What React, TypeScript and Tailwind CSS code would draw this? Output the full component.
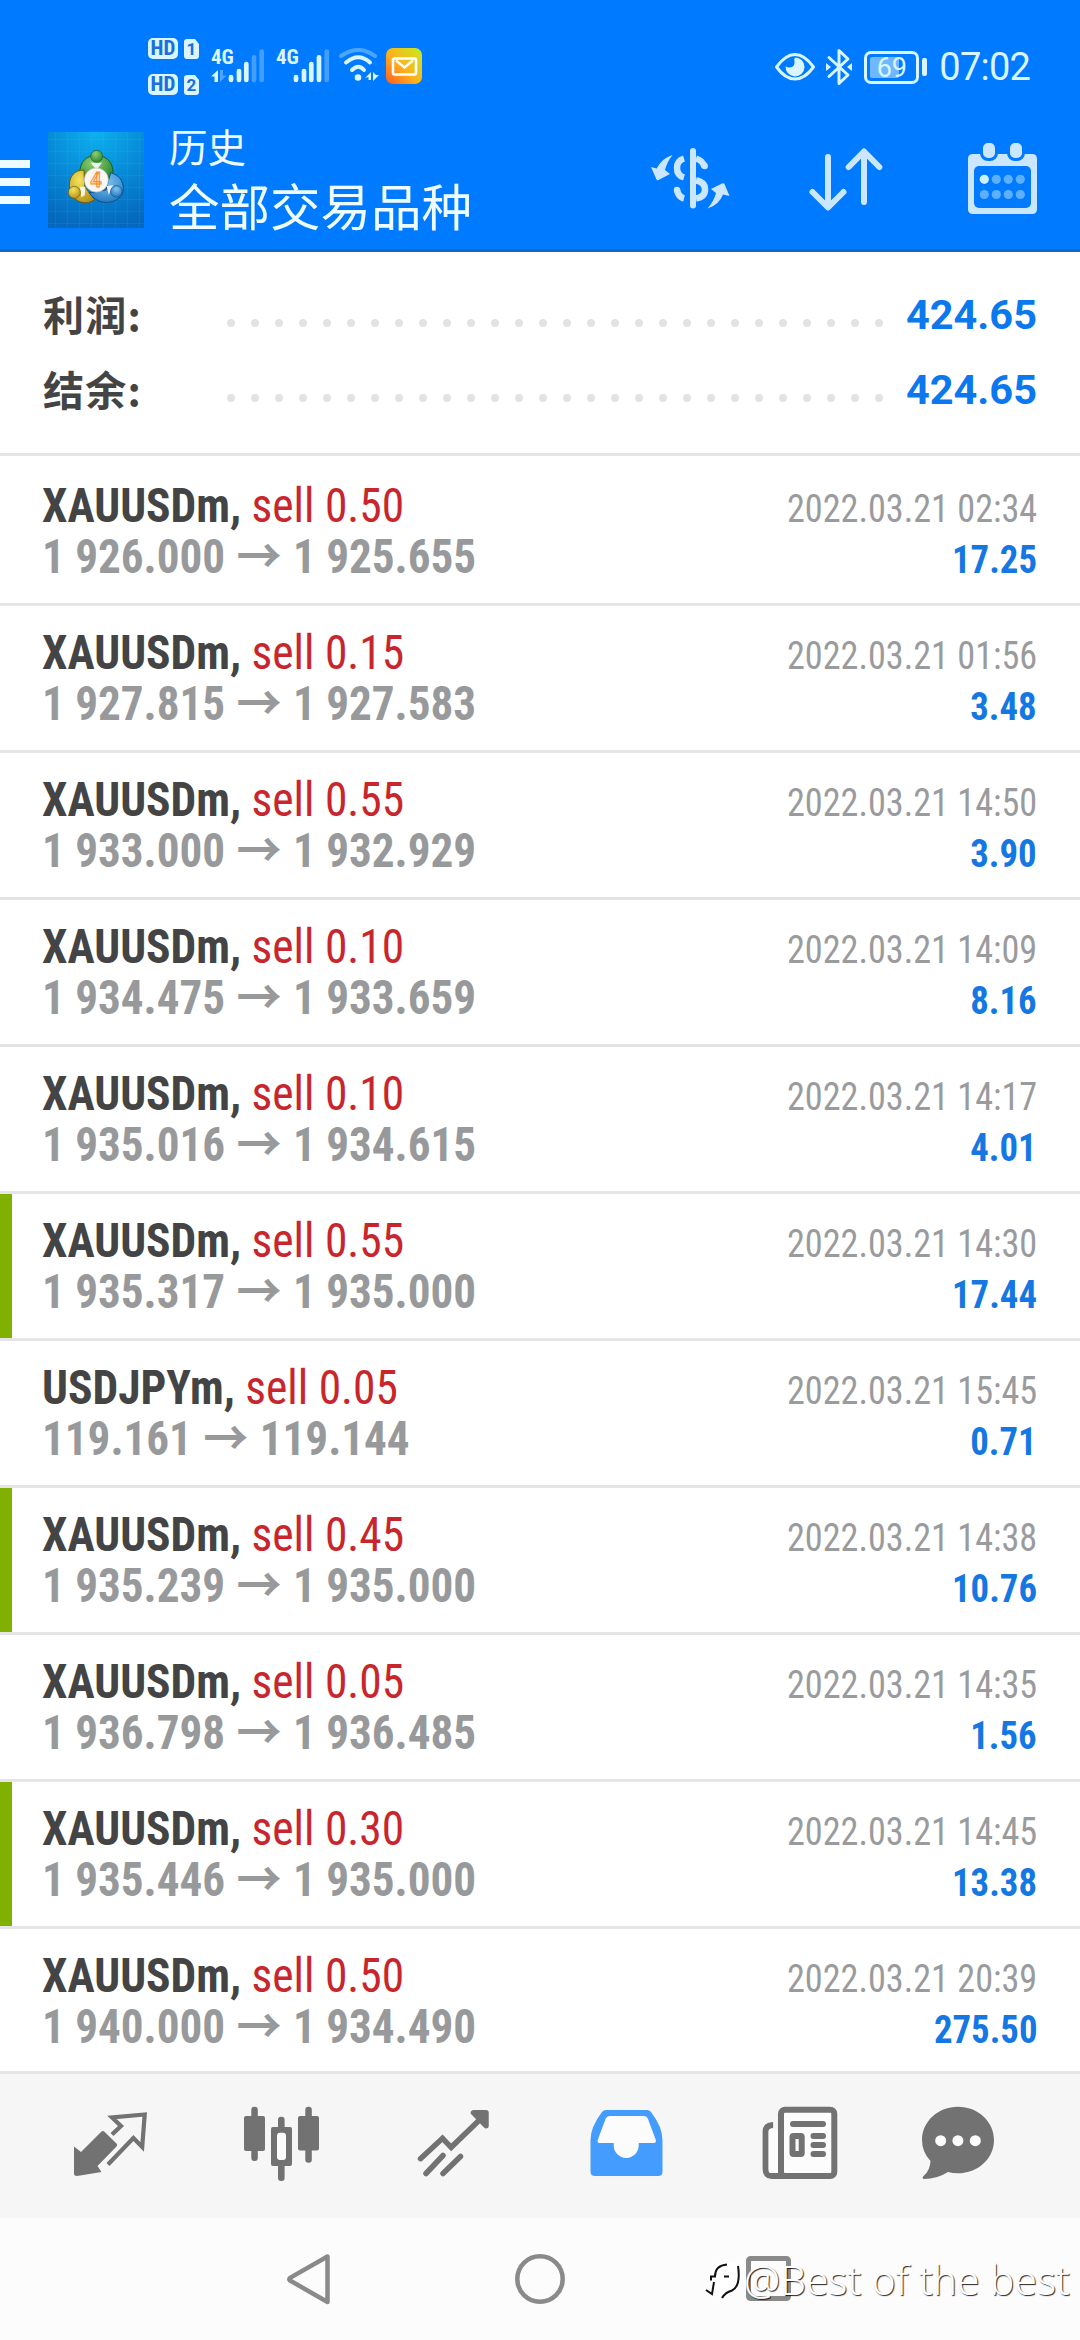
import React from 'react';

interface Deal {
  symbol: string;
  volume: string;
  open: string;
  close: string;
  time: string;
  profit: string;
  marked?: boolean;
}

const DEALS: Deal[] = [
  { symbol: 'XAUUSDm', volume: '0.50', open: '1 926.000', close: '1 925.655', time: '2022.03.21 02:34', profit: '17.25' },
  { symbol: 'XAUUSDm', volume: '0.15', open: '1 927.815', close: '1 927.583', time: '2022.03.21 01:56', profit: '3.48' },
  { symbol: 'XAUUSDm', volume: '0.55', open: '1 933.000', close: '1 932.929', time: '2022.03.21 14:50', profit: '3.90' },
  { symbol: 'XAUUSDm', volume: '0.10', open: '1 934.475', close: '1 933.659', time: '2022.03.21 14:09', profit: '8.16' },
  { symbol: 'XAUUSDm', volume: '0.10', open: '1 935.016', close: '1 934.615', time: '2022.03.21 14:17', profit: '4.01' },
  { symbol: 'XAUUSDm', volume: '0.55', open: '1 935.317', close: '1 935.000', time: '2022.03.21 14:30', profit: '17.44', marked: true },
  { symbol: 'USDJPYm', volume: '0.05', open: '119.161', close: '119.144', time: '2022.03.21 15:45', profit: '0.71' },
  { symbol: 'XAUUSDm', volume: '0.45', open: '1 935.239', close: '1 935.000', time: '2022.03.21 14:38', profit: '10.76', marked: true },
  { symbol: 'XAUUSDm', volume: '0.05', open: '1 936.798', close: '1 936.485', time: '2022.03.21 14:35', profit: '1.56' },
  { symbol: 'XAUUSDm', volume: '0.30', open: '1 935.446', close: '1 935.000', time: '2022.03.21 14:45', profit: '13.38', marked: true },
  { symbol: 'XAUUSDm', volume: '0.50', open: '1 940.000', close: '1 934.490', time: '2022.03.21 20:39', profit: '275.50' },
];

const SUMMARY = [
  { label: '利润:', value: '424.65' },
  { label: '结余:', value: '424.65' },
];

// --- STATUS BAR ---
const SimBadge = ({ slot }: { slot: string }) => (
  <div className="flex items-center gap-[6px] h-[21px]">
    <span className="w-[30px] h-[21px] rounded-[5px] bg-[#d9f5ff] text-[#1a6fd8] text-[21px] leading-[21px] font-bold font-stretch-condensed text-center">HD</span>
    <svg width="15" height="20" viewBox="0 0 15 20">
      <path d="M3 0h8l4 5v12a3 3 0 0 1-3 3H3a3 3 0 0 1-3-3V3a3 3 0 0 1 3-3z" fill="#d9f5ff" />
      <text x="7.5" y="16" textAnchor="middle" fontSize="17" fontWeight="700" fill="#1a6fd8">{slot}</text>
    </svg>
  </div>
);

const BARS = [
  { x: 20, top: 31 },
  { x: 28, top: 25 },
  { x: 35.3, top: 18 },
  { x: 43, top: 11.3 },
  { x: 50.7, top: 5.6 },
];

const Signal = ({ level, activity }: { level: number; activity?: boolean }) => (
  <svg width="56" height="40" viewBox="0 0 56 40">
    <text x="0" y="18" fontSize="21" fontWeight="700" fill="#d9f5ff" className="font-stretch-condensed">4G</text>
    {BARS.map((b, i) => (
      <path
        key={b.x}
        d={`M${b.x} ${b.top}V34`}
        stroke="#d9f5ff"
        strokeOpacity={i < level ? 1 : 0.3}
        strokeWidth="4.7"
        strokeLinecap="round"
      />
    ))}
    {activity && (
      <>
        <path d="M0 30.500l7-6.500v12H3.500v-5.500z" fill="#d9f5ff" />
        <path d="M9 24v12l6.500-6.500H12V24z" fill="#d9f5ff" fillOpacity="0.35" />
      </>
    )}
  </svg>
);

const WifiIcon = () => (
  <svg width="42" height="36" viewBox="0 0 42 36" fill="none" stroke="#d9f5ff" strokeWidth="4" strokeLinecap="round">
    <path d="M2 8Q19.500-4 36 8" strokeOpacity="0.35" />
    <path d="M7 14.500Q19.500 4 31 14.500" />
    <path d="M13 22Q19.500 15.500 25 22" />
    <circle cx="19" cy="29.500" r="3.300" fill="#d9f5ff" stroke="none" />
    <path d="M26 30l6-6v8h-2.500v-3zM34 24v9l6-6h-3z" fill="#d9f5ff" stroke="none" />
  </svg>
);

const MailBadge = () => (
  <svg width="36" height="36" viewBox="0 0 36 36" fill="none">
    <defs>
      <linearGradient id="mail" x1="0" y1="1" x2="1" y2="0">
        <stop offset="0" stopColor="#ff5a1f" />
        <stop offset="0.45" stopColor="#ffb01c" />
        <stop offset="1" stopColor="#c4ee1c" />
      </linearGradient>
    </defs>
    <rect width="36" height="36" rx="7" fill="url(#mail)" />
    <rect x="7" y="10.500" width="23" height="16" rx="1.500" stroke="#fff" strokeWidth="2.600" />
    <path d="M10 12.500l8.500 7 8.500-7" stroke="#fff" strokeWidth="2.400" />
  </svg>
);

const EyeIcon = () => (
  <svg width="42" height="30" viewBox="0 0 42 30" fill="none">
    <path d="M2.500 15C9 6 15 2.500 21 2.500S33 6 39.500 15C33 24 27 27 21 27S9 24 2.500 15z" stroke="#d9f5ff" strokeWidth="3" strokeLinejoin="round" />
    <path d="M21 5.500a9.500 9.500 0 1 1-9.400 8.500c3 3 8.400 1.500 8.900-2.500.3-2.500-.9-4.500 .5-6z" fill="#d9f5ff" />
  </svg>
);

const BluetoothIcon = () => (
  <svg width="26" height="38" viewBox="0 0 26 38" fill="none" stroke="#d9f5ff" strokeWidth="3" strokeLinejoin="round" strokeLinecap="round">
    <path d="M3 9.500l19 17.500-9 8.500V2.500l9 8.500L3 28.500" />
    <path d="M0 15l5 4-5 4zM26 15l-5 4 5 4z" fill="#d9f5ff" stroke="none" />
  </svg>
);

const StatusBar = () => (
  <div className="h-[120px] flex text-[#d9f5ff] pt-[38px]">
    <div className="flex pl-[148px]">
      <div className="flex flex-col gap-[15px] mr-3">
        <SimBadge slot="1" />
        <SimBadge slot="2" />
      </div>
      <div className="flex pt-2">
        <Signal level={3} activity />
      </div>
      <div className="flex pt-2 ml-[9px]">
        <Signal level={4} />
      </div>
      <div className="flex pt-[10px] ml-[7px]">
        <WifiIcon />
      </div>
      <div className="flex pt-[10px] ml-[5px]">
        <MailBadge />
      </div>
    </div>
    <div className="flex items-center h-[58px] ml-auto pr-[50px]">
      <EyeIcon />
      <div className="ml-[10px]">
        <BluetoothIcon />
      </div>
      <div className="ml-[12px] w-[55px] h-[33px] rounded-[7px] border-[3px] border-[#d9f5ff] p-[3px] flex relative">
        <div className="w-[29px] h-full bg-[#6fb8ff] rounded-[2px]" />
        <span className="absolute inset-0 text-center text-[27px] leading-[28px]">69</span>
      </div>
      <div className="ml-[3px] w-[5px] h-[18px] rounded-[2px] bg-[#d9f5ff]" />
      <span className="ml-[12px] text-[38px] leading-[44px] tracking-[-0.8px]">07:02</span>
    </div>
  </div>
);

// --- HEADER ---
const AppLogo = () => (
  <svg width="96" height="96" viewBox="0 0 288 288">
    <defs>
      <radialGradient id="sky" cx="0.5" cy="0" r="1">
        <stop offset="0" stopColor="#0db0ee" />
        <stop offset="0.5" stopColor="#078bd8" />
        <stop offset="1" stopColor="#0568bd" />
      </radialGradient>
      <radialGradient id="green" cx="0.4" cy="0.3" r="0.8">
        <stop offset="0" stopColor="#8fd070" />
        <stop offset="1" stopColor="#1f7d2e" />
      </radialGradient>
      <radialGradient id="gold" cx="0.4" cy="0.3" r="0.8">
        <stop offset="0" stopColor="#f5e45c" />
        <stop offset="1" stopColor="#b08c14" />
      </radialGradient>
      <radialGradient id="azure" cx="0.5" cy="0.3" r="0.8">
        <stop offset="0" stopColor="#7cc4f2" />
        <stop offset="1" stopColor="#1b70b8" />
      </radialGradient>
    </defs>
    <rect width="288" height="288" fill="url(#sky)" />
    <path d="M22 0v288M58 0v288M94 0v288M130 0v288M166 0v288M202 0v288M238 0v288M274 0v288M0 22h288M0 58h288M0 94h288M0 130h288M0 166h288M0 202h288M0 238h288M0 274h288" stroke="#5cc8f5" strokeOpacity="0.18" strokeWidth="2" />
    <path d="M95 124c0-34 20-54 50-54s52 22 50 56l-8 22-40-36-38 24z" fill="url(#green)" stroke="#135f26" strokeWidth="3" />
    <path d="M108 114c-28 0-44 18-44 46 0 36 26 56 58 52l18-8-30-40z" fill="url(#gold)" stroke="#6b5a10" strokeWidth="3" />
    <path d="M188 122c24 6 38 24 38 48 0 30-34 46-64 40-16-4-32-16-38-28l50-8z" fill="url(#azure)" stroke="#0e4f8c" strokeWidth="3" />
    <path d="M128 92l34 0-16 22zM96 164l16 0-2 26-10 6zM196 160l-20 2 6 26z" fill="#fff" fillOpacity="0.85" />
    <circle cx="146" cy="73" r="18" fill="url(#green)" stroke="#135f26" strokeWidth="2" />
    <circle cx="79" cy="181" r="18" fill="url(#gold)" stroke="#6b5a10" strokeWidth="2" />
    <circle cx="205" cy="178" r="17" fill="url(#azure)" stroke="#0e4f8c" strokeWidth="2" />
    <circle cx="145" cy="144" r="36" fill="#faf6f4" stroke="#c9c4c0" strokeWidth="2" />
    <text x="144" y="165" textAnchor="middle" fontSize="60" fontWeight="700" fill="#fbd9a8" stroke="#f08a30" strokeWidth="2.500">4</text>
  </svg>
);

const CurrencyIcon = () => (
  <svg width="96" height="96" viewBox="0 0 96 96" fill="#cbe6ff">
    <path d="M9 35l5.500 12.500q.5 1 2 .5L28 42l-5-4q2-8 7.500-15Q20 26 14.700 36.500z" />
    <path d="M87.500 64L82.500 52q-.5-1-2-.8L69 57l5 4q-2 8-8.500 15.500Q77 73 81 62.500z" />
    <rect x="48" y="16" width="6" height="60.500" rx="3" />
    <g fill="none" stroke="#cbe6ff" strokeWidth="6.500">
      <path d="M42 26.500Q35 28.500 35 36t7 9.500" />
      <path d="M54 26.500q7 2 8.500 8.500" />
      <path d="M54 48.500q9 1.500 9 9t-9 9" />
      <path d="M35 58q1.500 7 7 8.500" />
    </g>
    <circle cx="62.700" cy="34" r="3.200" />
    <circle cx="35" cy="58" r="3.200" />
  </svg>
);

const SortIcon = () => (
  <svg width="96" height="96" viewBox="0 0 96 96" fill="none" stroke="#cbe6ff" strokeWidth="6" strokeLinecap="round" strokeLinejoin="round">
    <path d="M30 25v50M14.500 60L30 75.500 45.500 60" />
    <path d="M66 70V20M50.700 35L66 19.500 81.300 35" />
  </svg>
);

const CalendarIcon = () => (
  <svg width="96" height="96" viewBox="0 0 96 96">
    <rect x="14" y="22" width="69" height="60" rx="4.500" fill="#cbe6ff" />
    <rect x="20" y="34" width="57" height="42" rx="5" fill="#007aff" />
    <rect x="27.500" y="9.500" width="15" height="18" rx="6.500" fill="#cbe6ff" stroke="#007aff" strokeWidth="3" />
    <rect x="54.500" y="9.500" width="15" height="18" rx="6.500" fill="#cbe6ff" stroke="#007aff" strokeWidth="3" />
    {[47.3, 62.5].map((cy) =>
      [30.3, 42.3, 54.3, 66.3].map((cx) => (
        <circle key={`${cx}-${cy}`} cx={cx} cy={cy} r="4.600" fill={cy < 50 && cx < 40 ? '#cdf0ff' : '#5cb0ff'} />
      )),
    )}
  </svg>
);

const Header = () => (
  <div className="h-[132px] flex border-b-[3px] border-[#1169c9] text-[#eefcff]">
    <div className="w-[30px] pt-[40px] flex flex-col gap-[10px]">
      <div className="h-2 bg-[#eefcff]" />
      <div className="h-2 bg-[#eefcff]" />
      <div className="h-2 bg-[#eefcff]" />
    </div>
    <div className="ml-[18px] pt-[12px]">
      <AppLogo />
    </div>
    <div className="ml-[25px] -mt-[3px] font-['Noto_Sans_CJK_SC',sans-serif]">
      <div className="text-[38.500px] leading-[56px]">历史</div>
      <div className="text-[50.500px] leading-[63px]">全部交易品种</div>
    </div>
    <div className="ml-auto pr-[30px] pt-[12px] flex gap-[60px]">
      <CurrencyIcon />
      <SortIcon />
      <CalendarIcon />
    </div>
  </div>
);

// --- SUMMARY ---
const Summary = () => (
  <div className="h-[204px] border-b-[3px] border-[#e5e5e5] pt-[25px] pl-[43px] pr-[43px]">
    {SUMMARY.map((row) => (
      <div key={row.label} className="h-[75px] flex items-center">
        <span className="w-[184px] -mt-[2px] text-[41px] leading-[75px] tracking-[1.2px] font-bold text-[#444] font-['Noto_Sans_CJK_SC',sans-serif]">{row.label}</span>
        <div className="w-[656px] flex justify-between pt-[16px]">
          {Array.from({ length: 28 }, (_, i) => (
            <div key={i} className="size-2 rounded-full bg-[#e3e3e5]" />
          ))}
        </div>
        <span className="ml-auto text-[41.500px] leading-[75px] font-bold text-[#0c78ee]">{row.value}</span>
      </div>
    ))}
  </div>
);

// --- DEAL LIST ---
const DealRow = ({ deal }: { deal: Deal }) => (
  <div className="h-[147px] last:h-[145px] flex border-b-[3px] border-[#e5e5e5]">
    <div className={deal.marked ? 'w-3 bg-[#80b000]' : 'w-3'} />
    <div className="flex-1 pt-[21px] pl-[30px] pr-[43px] leading-[51px] font-stretch-condensed">
      <div className="h-[48px] flex items-baseline justify-between">
        <div className="text-[48px] origin-left scale-x-[0.947]">
          <span className="font-bold text-[#444]">{deal.symbol},</span>{' '}
          <span className="text-[#c8262c]">sell {deal.volume}</span>
        </div>
        <div className="text-[38.500px] text-[#9a9b9d] origin-right scale-x-[0.94]">{deal.time}</div>
      </div>
      <div className="h-[51px] flex items-baseline justify-between">
        <div className="text-[48px] font-bold text-[#98999b] origin-left scale-x-[0.94]">
          {deal.open} <span className="mx-[1px] font-['Noto_Sans_CJK_SC',sans-serif] leading-none">→</span> {deal.close}
        </div>
        <div className="text-[38.500px] font-bold text-[#1577e2] origin-right scale-x-[0.955]">{deal.profit}</div>
      </div>
    </div>
  </div>
);

// --- TAB BAR ---
const QuotesIcon = () => (
  <svg width="96" height="96" viewBox="0 0 96 96" fill="none">
    <path d="M12 48.500l7 5.500L39 34q1.800-2 3.700 0L54.500 45.500q1.500 1.500 0 3L35.500 68l4 6-24.500 4q-3 0-3-2.500z" fill="#727272" />
    <path d="M50 36.500l9-8.500-9-8.500 32.700-3-2.500 32.500-8.800-9L46 66.500" stroke="#727272" strokeWidth="4.200" />
  </svg>
);

const ChartIcon = () => (
  <svg width="96" height="96" viewBox="0 0 96 96" fill="#727272">
    <rect x="10" y="18" width="21" height="35" rx="2" />
    <rect x="17.300" y="8.700" width="6.500" height="54.300" rx="3" />
    <rect x="64" y="18" width="21" height="34.500" rx="2" />
    <rect x="71.300" y="8.700" width="6.500" height="56" rx="3" />
    <rect x="44" y="18.700" width="6.600" height="15" rx="3" />
    <rect x="44" y="64" width="6.600" height="19" rx="3" />
    <rect x="37" y="29" width="21" height="39" rx="2" />
    <rect x="43" y="34.700" width="9" height="27.300" rx="3" fill="#fcfcfc" />
  </svg>
);

const TradeIcon = () => (
  <svg width="96" height="96" viewBox="0 0 96 96" fill="none" stroke="#727272" strokeWidth="5.500" strokeLinecap="round">
    <path d="M14.500 60.700l22-20.400 8.700 9L76 19.500" />
    <path d="M67.500 14.700H80v13z" fill="#727272" strokeLinejoin="round" />
    <path d="M20 75.500l17-18M37 75.500l17.500-17" />
  </svg>
);

const HistoryIcon = () => (
  <svg width="96" height="96" viewBox="0 0 96 96">
    <path d="M24 14q1.500-2 4-2h41q2.500 0 4 2 11.500 15 11.500 28v31.500q0 4.500-4.500 4.500H17q-4.500 0-4.500-4.500V42Q12.500 29 24 14z" fill="#459cff" />
    <path d="M31.500 18H66q2.800 0 3.800 2.500l8 21.500q.8 3-2 3H60.700v2.500a12.500 12.500 0 0 1-25 0V45H21.500q-2.500 0-1.800-3l8-21.500q1-2.500 3.800-2.500z" fill="#fcfcfc" />
  </svg>
);

const NewsIcon = () => (
  <svg width="96" height="96" viewBox="0 0 96 96" fill="none">
    <path d="M23.100 27q-7.500 0-7.500 7v36q0 8 6 8h12V70" stroke="#727272" strokeWidth="6" />
    <rect x="18.600" y="31" width="9.400" height="44" rx="2" fill="#fcfcfc" />
    <rect x="31" y="11.700" width="53.300" height="66.300" rx="4" fill="#fcfcfc" stroke="#727272" strokeWidth="6" />
    <path d="M43 26h30M63.500 38h9.500M63.500 47h9.500M63.500 56h9.500" stroke="#727272" strokeWidth="6" strokeLinecap="round" />
    <rect x="42.500" y="38" width="9.200" height="18" rx="1" stroke="#727272" strokeWidth="6" />
  </svg>
);

const ChatIcon = () => (
  <svg width="96" height="96" viewBox="0 0 96 96">
    <path d="M48 8.700c20 0 36 14.800 36 33.300S68 75.300 48 75.300q-5.500 0-10-1.300-11 7-24 7-3-1 0-3.500 6-5 6.500-14.500Q12 54 12 42C12 23.500 28 8.700 48 8.700z" fill="#727272" />
    <circle cx="30.700" cy="42.700" r="5.500" fill="#fcfcfc" />
    <circle cx="47.900" cy="42.700" r="5.500" fill="#fcfcfc" />
    <circle cx="65.300" cy="42.700" r="5.500" fill="#fcfcfc" />
  </svg>
);

const TabBar = () => (
  <div className="h-[144px] bg-[#f6f6f6] flex items-center pl-[62px] gap-[76px]">
    <QuotesIcon />
    <ChartIcon />
    <TradeIcon />
    <HistoryIcon />
    <NewsIcon />
    <div className="-ml-3">
      <ChatIcon />
    </div>
  </div>
);

// --- SYSTEM NAVIGATION ---
const SystemNav = () => (
  <div className="h-[122px] bg-[#fcfcfc] relative flex items-start pt-[33px] pl-[280px]">
    <svg width="56" height="56" viewBox="0 0 56 56" fill="none" stroke="#8a8a8a" strokeWidth="4.500" strokeLinejoin="round">
      <path d="M47.500 5.500v45.500L10 29.500q-1.500-1.300 0-2.600z" />
    </svg>
    <svg width="56" height="56" viewBox="0 0 56 56" fill="none" className="ml-[176px]">
      <circle cx="28" cy="28" r="22.700" stroke="#8a8a8a" strokeWidth="4.500" />
    </svg>
    <svg width="56" height="56" viewBox="0 0 56 56" fill="none" className="ml-[173px]">
      <rect x="7.500" y="7.500" width="40" height="40" rx="2" stroke="#8a8a8a" strokeWidth="5" />
    </svg>
    <div className="absolute left-[702px] top-[36px] flex items-center text-white">
      <svg width="42" height="50" viewBox="0 0 42 50" fill="none">
        <path d="M4 38l3-8q0-20 14-22h14l3 14q1 14-10 17l-10 6-4-6z" fill="#fff" />
        <path d="M8 22.500h5q0-11 12-12M9 22.500v4M22 22.500h5M36 12q3 20-6 24.500-7 2-10 7.500M12 28l-2 12-6-4" stroke="#111" strokeWidth="2" />
      </svg>
      <span className="font-['Noto_Sans',sans-serif] font-light text-[40.700px] leading-[48px] whitespace-nowrap text-shadow-[1px_1px_1px_rgba(0,0,0,0.85)]">@Best of the best</span>
    </div>
  </div>
);

export default function App() {
  return (
    <div className="w-[1080px] h-[2340px] overflow-hidden bg-white flex flex-col font-['Roboto','Noto_Sans_CJK_SC',sans-serif]">
      <div className="bg-[#007aff]">
        <StatusBar />
        <Header />
      </div>
      <Summary />
      <div className="pt-[3px]">
        {DEALS.map((deal) => (
          <DealRow key={deal.time} deal={deal} />
        ))}
      </div>
      <TabBar />
      <SystemNav />
    </div>
  );
}
